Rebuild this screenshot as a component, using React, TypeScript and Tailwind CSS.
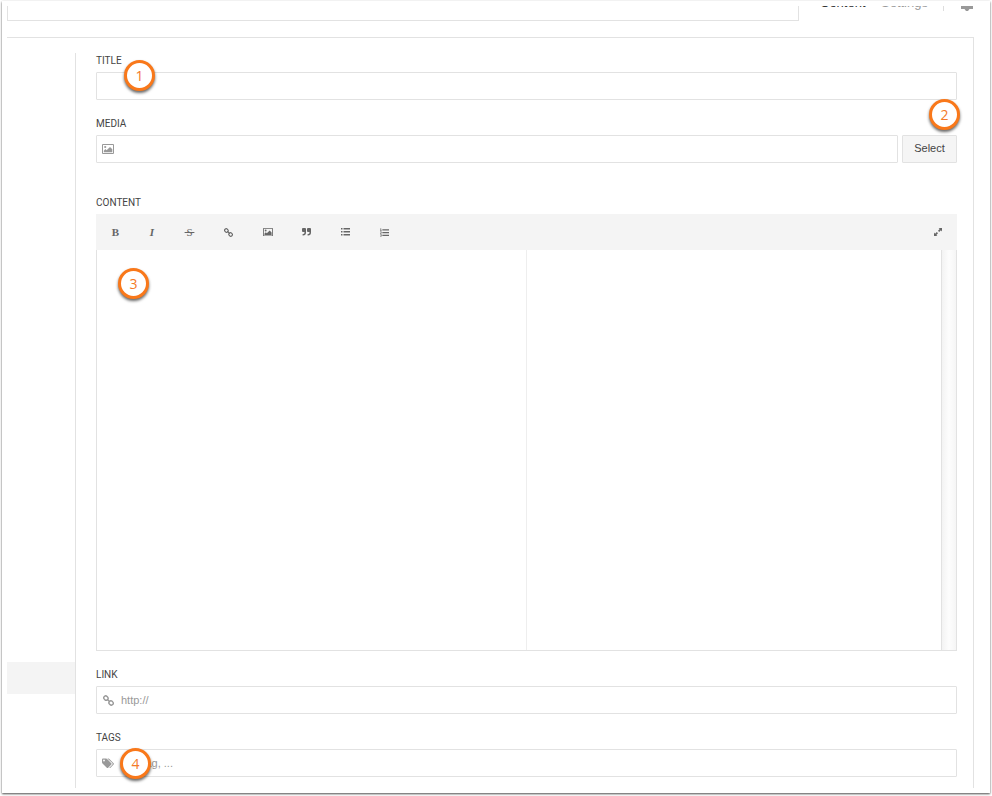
import type { ReactNode } from "react";

const iconClass = "block fill-current";

function LinkIcon({ size = 10 }: { size?: number }) {
  return (
    <svg width={size} height={size} viewBox="0 0 12 12" fill="none" stroke="currentColor" strokeWidth="1.5" className="block">
      <rect x="0.8" y="1.200" width="4.800" height="4.200" rx="2" transform="rotate(45 3.2 3.3)" />
      <rect x="6.400" y="6.600" width="4.800" height="4.200" rx="2" transform="rotate(45 8.8 8.7)" />
      <path d="M4.600 4.600l3 3" />
    </svg>
  );
}

function PictureIcon({ width = 10 }: { width?: number }) {
  return (
    <svg width={width} height={(width * 10) / 12} viewBox="0 0 12 10" className={iconClass}>
      <path fillRule="evenodd" d="M1 0h10a1 1 0 0 1 1 1v8a1 1 0 0 1-1 1H1a1 1 0 0 1-1-1V1a1 1 0 0 1 1-1zm0 .9v8.200h10V.9z" />
      <circle cx="3.200" cy="3" r="1.100" />
      <path d="M1.800 8.300V6.700l1.600-1.600 1.200 1.200L8 3l2.300 2.300v3z" />
    </svg>
  );
}

function QuoteIcon() {
  return (
    <svg width="9" height="8" viewBox="0 0 9 8" className={iconClass}>
      <path d="M1 0h2a1 1 0 0 1 1 1v3.500A3 3 0 0 1 1 7.500H.6V6H1a1.500 1.500 0 0 0 1.500-1.500V4H1a1 1 0 0 1-1-1V1a1 1 0 0 1 1-1z" />
      <path d="M6 0h2a1 1 0 0 1 1 1v3.500A3 3 0 0 1 6 7.500h-.4V6H6a1.500 1.500 0 0 0 1.500-1.500V4H6a1 1 0 0 1-1-1V1a1 1 0 0 1 1-1z" />
    </svg>
  );
}

function BulletListIcon() {
  return (
    <svg width="9" height="8" viewBox="0 0 9 8" className={iconClass}>
      <path d="M0 0h1.500v1.500H0zM0 3h1.500v1.500H0zM0 6h1.500v1.500H0zM2.500 0H9v1.500H2.500zM2.500 3H9v1.500H2.500zM2.500 6H9v1.500H2.500z" />
    </svg>
  );
}

function NumberListIcon() {
  return (
    <svg width="9" height="9" viewBox="0 0 10 9" className={iconClass}>
      <path d="M.6 0h.8v2.200h.5v.5H.1v-.5h.5V.8H.1V.3zM.1 3.400h1.700v1.300L.9 5.300h.9v.6H.1V5l1-.7v-.3h-1zM.1 6.500h1.700v2.400H.1v-.5h1v-.5H.4v-.5h.7V7h-1zM2.600 1H10v1.300H2.600zM2.600 4H10v1.300H2.600zM2.600 7H10v1.300H2.600z" />
    </svg>
  );
}

function ExpandIcon() {
  return (
    <svg width="8" height="8" viewBox="0 0 8 8" className={iconClass}>
      <path d="M4.600 0H8v3.400L6.900 2.300 5.200 4 4 2.800l1.700-1.700zM3.400 8H0V4.600l1.100 1.100L2.800 4 4 5.200 2.300 6.900z" />
    </svg>
  );
}

function TagsIcon() {
  return (
    <svg width="12" height="11" viewBox="0 0 12 11" className={iconClass}>
      <path
        fillRule="evenodd"
        d="M0 1.500A1 1 0 0 1 1 .5h3.200l.9.500 4.200 4.200a1 1 0 0 1 0 1.400L6.200 9.700a1 1 0 0 1-1.400 0L.5 5.500 0 4.500zM2 1.600a.9.9 0 1 0 0 1.800.9.9 0 0 0 0-1.800z"
      />
      <path d="M5.400.5h1.100l.9.500 4.200 4.200a1 1 0 0 1 0 1.400L8.500 9.700q-.6.500-1.200.1l3-3.100a1.400 1.400 0 0 0 0-1.700z" />
    </svg>
  );
}

function Marker({ n, place }: { n: number; place: string }) {
  return (
    <span
      className={`absolute z-10 flex size-[31px] items-center justify-center rounded-full border-3 border-[#f9781a] bg-white font-['Open_Sans',sans-serif] text-sm leading-none text-[#f47a28] shadow-[0_2px_3px_rgba(0,0,0,0.6)] ${place}`}
    >
      {n}
    </span>
  );
}

function Field({ id, label, className = "", children }: { id: string; label: string; className?: string; children: ReactNode }) {
  return (
    <div className={`relative flex flex-col gap-[3px] ${className}`}>
      <label htmlFor={id} className="block text-[10px] leading-4 text-[#444] uppercase">
        {label}
      </label>
      {children}
    </div>
  );
}

function TextBox({ id, icon, placeholder }: { id: string; icon?: ReactNode; placeholder?: string }) {
  return (
    <div className="flex h-7 min-w-0 flex-1 basis-7 items-center rounded-[1px] border border-[#e2e2e2] bg-white">
      {icon && <span className="flex w-6 justify-center pr-0.5 text-[#999]">{icon}</span>}
      <input
        id={id}
        type="text"
        placeholder={placeholder}
        className="h-full min-w-0 flex-1 bg-transparent font-['Liberation_Sans',sans-serif] text-[11px] text-[#444] outline-none placeholder:text-[#999]"
      />
    </div>
  );
}

const tools: { name: string; icon: ReactNode }[] = [
  { name: "Bold", icon: <b className="font-['Liberation_Serif',serif] text-[11px]">B</b> },
  { name: "Italic", icon: <i className="font-['Liberation_Serif',serif] text-[11px] font-bold">I</i> },
  { name: "Strikethrough", icon: <s className="font-['Liberation_Serif',serif] text-[11px]">{"\u200a\u200aS\u200a\u200a"}</s> },
  { name: "Link", icon: <LinkIcon size={9} /> },
  { name: "Image", icon: <PictureIcon /> },
  { name: "Quote", icon: <QuoteIcon /> },
  { name: "Bulleted list", icon: <BulletListIcon /> },
  { name: "Numbered list", icon: <NumberListIcon /> },
];

export default function App() {
  return (
    <div className="bg-white pb-[3px] font-[Roboto,sans-serif] text-[#444]">
      <div className="mx-0.5 mt-px border-t border-transparent bg-white px-[5px] pt-1 pb-[5px] shadow-[0_1px_2px_rgba(0,0,0,0.7)]">
        <header className="flex h-[15px] items-end overflow-hidden">
          <div className="h-7 flex-1 border border-[#e2e2e2]" />
          <nav className="flex h-[26px] w-[186px] items-start pl-[21px] font-['Liberation_Sans',sans-serif] text-[13px] leading-4">
            <a href="#content" className="w-[61px] text-[#333]">
              Content
            </a>
            <a href="#settings" className="w-[62px] text-[#999]">
              Settings
            </a>
            <span className="h-4 w-[18px] border-l border-[#ddd]" />
            <svg width="12" height="16" viewBox="0 0 12 16" className="fill-[#999]">
              <path d="M0 4h12v10H8.500L7 16H5l-1.500-2H0z" />
            </svg>
          </nav>
        </header>

        <main className="mt-4 mr-[11px] flex border-t border-r border-[#e2e2e2] pt-[15px]">
          <aside className="flex w-[69px] flex-col justify-end border-r border-[#e2e2e2] pb-[94px]">
            <div className="h-8 bg-[#f4f4f4]" />
          </aside>

          <form className="flex min-w-0 flex-1 flex-col gap-4 pr-4 pb-[11px] pl-5">
            <Field id="title" label="Title">
              <TextBox id="title" />
              <Marker n={1} place="left-7 top-[7px]" />
            </Field>

            <Field id="media" label="Media">
              <div className="flex gap-1">
                <TextBox id="media" icon={<PictureIcon width={12} />} />
                <button
                  type="button"
                  className="h-7 w-[55px] rounded-[1px] border border-[#e2e2e2] bg-[#f5f5f5] pb-0.5 font-['Liberation_Sans',sans-serif] text-[11px]"
                >
                  Select
                </button>
              </div>
              <Marker n={2} place="-right-[3px] -top-[17px]" />
            </Field>

            <Field id="content" label="Content" className="mt-4">
              <div>
                <div className="flex h-9 items-center bg-[#f4f4f4] pr-[7px] pl-px text-[#666]">
                  {tools.map((tool) => (
                    <button
                      key={tool.name}
                      type="button"
                      aria-label={tool.name}
                      className="flex h-full w-[39px] items-center justify-center first:w-[37px] nth-2:w-9"
                    >
                      {tool.icon}
                    </button>
                  ))}
                  <button type="button" aria-label="Fullscreen" className="ml-auto flex size-6 items-center justify-center">
                    <ExpandIcon />
                  </button>
                </div>
                <div className="flex h-[401px] border border-t-0 border-[#e2e2e2]">
                  <textarea id="content" className="block w-1/2 resize-none border-r border-[#eee] p-5 text-xs outline-none" />
                  <div className="flex w-1/2 justify-end">
                    <div className="w-[15px] border-l border-[#e2e2e2] bg-linear-to-r from-[#f3f3f3] via-[#fdfdfd] to-[#f5f5f5]" />
                  </div>
                </div>
              </div>
              <Marker n={3} place="left-[22px] top-[73px]" />
            </Field>

            <Field id="link" label="Link">
              <TextBox id="link" icon={<LinkIcon size={11} />} placeholder="http://" />
            </Field>

            <Field id="tags" label="Tags">
              <TextBox id="tags" icon={<TagsIcon />} placeholder="tag, tag, ..." />
              <Marker n={4} place="left-6 top-[18px]" />
            </Field>
          </form>
        </main>
      </div>
    </div>
  );
}
